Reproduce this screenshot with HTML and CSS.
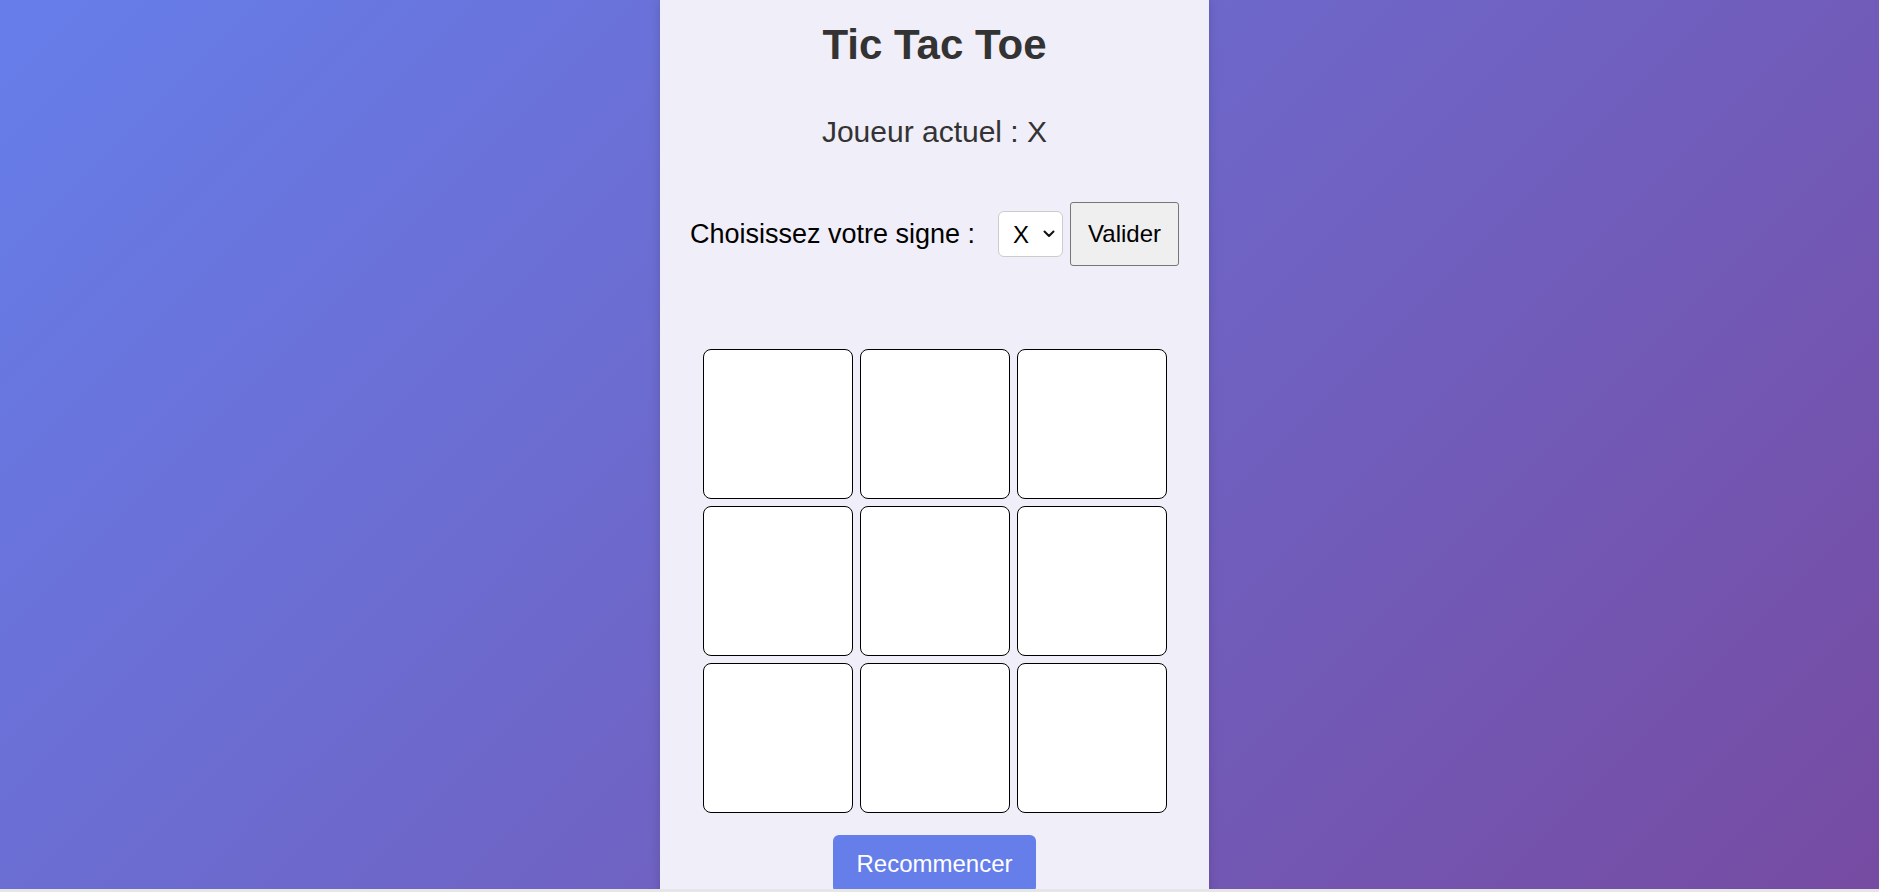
FILE: index.html
```html
<!DOCTYPE html>
<html lang="fr">
<head>
<meta charset="utf-8">
<title>Tic Tac Toe</title>
<link rel="stylesheet" href="styles.css">
</head>
<body>
<div class="page">
  <main class="game">
    <h1 class="title">Tic Tac Toe</h1>
    <p class="status">Joueur actuel : X</p>
    <div class="choice">
      <label class="choice-label" for="sign">Choisissez votre signe :</label>
      <div class="select-wrap">
        <select class="choice-select" id="sign">
          <option>X</option>
          <option>O</option>
        </select>
        <svg class="select-chevron" width="12" height="8" viewBox="0 0 12 8" aria-hidden="true">
          <path d="M1.5 1.5 L6 6 L10.5 1.5" fill="none" stroke="#111" stroke-width="2" stroke-linecap="round" stroke-linejoin="round"/>
        </svg>
      </div>
      <button class="choice-btn" type="button">Valider</button>
    </div>
    <div class="board">
      <div class="cell"></div>
      <div class="cell"></div>
      <div class="cell"></div>
      <div class="cell"></div>
      <div class="cell"></div>
      <div class="cell"></div>
      <div class="cell"></div>
      <div class="cell"></div>
      <div class="cell"></div>
    </div>
    <button class="restart" type="button">Recommencer</button>
  </main>
</div>
<div class="bottom-strip"></div>
</body>
</html>
```

FILE: styles.css
```css
html, body {
  margin: 0;
  padding: 0;
  height: 100%;
  overflow: hidden;
}

body {
  font-family: "Liberation Sans", Arial, sans-serif;
  background: linear-gradient(135deg, #667eea 0%, #764ba2 100%);
}

.page {
  display: flex;
  justify-content: center;
  padding-right: 10px;
  min-height: 100vh;
}

.game {
  width: 549px;
  background: #f0eef8;
  box-shadow: 0 0 10px rgba(0, 0, 0, 0.15);
  display: flex;
  flex-direction: column;
  align-items: center;
  padding-bottom: 20px;
}

.title {
  margin: 21px 0 0;
  font-size: 42px;
  line-height: 48px;
  font-weight: bold;
  color: #333;
}

.status {
  margin: 46px 0 0;
  font-size: 30px;
  line-height: 34px;
  color: #333;
}

.choice {
  margin-top: 53px;
  display: flex;
  align-items: center;
  height: 64px;
}

.choice-label {
  font-size: 27px;
  color: #000;
  margin-right: 23px;
}

.select-wrap {
  position: relative;
  margin-right: 7px;
}

.choice-select {
  display: block;
  -webkit-appearance: none;
  appearance: none;
  width: 65px;
  height: 46px;
  font-family: "Liberation Sans", Arial, sans-serif;
  font-size: 24px;
  color: #000;
  background: #fff;
  border: 1px solid #ccc;
  border-radius: 6px;
  padding: 0 0 0 14px;
}

.select-chevron {
  position: absolute;
  right: 8px;
  top: 19px;
  pointer-events: none;
}

.choice-btn {
  height: 64px;
  padding: 0 17px;
  font-family: "Liberation Sans", Arial, sans-serif;
  font-size: 24px;
  color: #000;
  background: #efefef;
  border: 1px solid #767676;
  border-radius: 3px;
}

.board {
  margin-top: 83px;
  display: grid;
  grid-template-columns: repeat(3, 150px);
  grid-auto-rows: 150px;
  gap: 7px;
}

.cell {
  box-sizing: border-box;
  background: #fff;
  border: 1px solid #000;
  border-radius: 8px;
}

.restart {
  margin-top: 22px;
  height: 58px;
  padding: 0 23px;
  font-family: "Liberation Sans", Arial, sans-serif;
  font-size: 24px;
  color: #fff;
  background: #667eea;
  border: none;
  border-radius: 6px;
}

.bottom-strip {
  position: fixed;
  left: 0;
  right: 0;
  bottom: 0;
  height: 3px;
  background: #e6e6e6;
}
```
